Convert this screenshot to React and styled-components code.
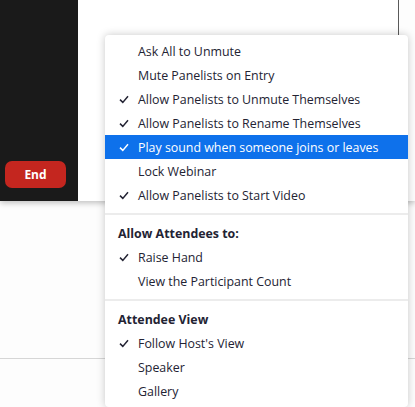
import React from "react";
import styled, { createGlobalStyle } from "styled-components";

const Global = createGlobalStyle`
  html, body {
    margin: 0;
    padding: 0;
    background: #fdfdfd;
    font-family: "Open Sans", "Noto Sans", sans-serif;
  }
`;

const Page = styled.div`
  position: relative;
  width: 415px;
  height: 407px;
  overflow: hidden;
  background: #fdfdfd;
`;

const Window = styled.div`
  display: flex;
  height: 201px;
  box-shadow: 0 2px 6px rgba(0, 0, 0, 0.25);
  position: relative;
`;

const Video = styled.div`
  width: 78px;
  background: #1a1a1a;
  display: flex;
  align-items: flex-end;
  padding: 0 0 13px 5px;
  box-sizing: border-box;
`;

const EndButton = styled.button`
  width: 61px;
  height: 27px;
  border: none;
  border-radius: 7px;
  background: #c4261f;
  color: #fff;
  font-family: "Open Sans", sans-serif;
  font-weight: 700;
  font-size: 12px;
  padding: 0;
`;

const Content = styled.div`
  width: 320px;
  background: #ffffff;
  border-right: 1px solid #5a5a5a;
`;

const Spacer = styled.div`
  height: 157px;
`;

const Rule = styled.div`
  height: 1px;
  background: #d6d6d6;
`;

const Menu = styled.div`
  position: absolute;
  left: 105px;
  top: 35px;
  width: 303px;
  height: 372px;
  background: #fff;
  border-radius: 4px;
  box-shadow: 0 0 8px rgba(0, 0, 0, 0.22);
  padding-top: 4px;
  box-sizing: border-box;
`;

const Item = styled.div`
  display: flex;
  align-items: center;
  height: 24px;
  padding-left: 14px;
  font-size: 12.4px;
  color: ${(p) => (p.active ? "#ffffff" : "#232333")};
  background: ${(p) => (p.active ? "#0e71eb" : "transparent")};
  white-space: nowrap;
`;

const Check = styled.span`
  width: 19px;
  display: flex;
  align-items: center;
`;

const Heading = styled.div`
  height: 24px;
  display: flex;
  align-items: center;
  padding-left: 13px;
  font-weight: 700;
  font-size: 12.4px;
  color: #232333;
`;

const Divider = styled.div`
  height: 2px;
  background: #ececec;
  margin: 6px 0;
`;

const Tick = ({ color }) => (
  <svg width="10" height="9" viewBox="0 0 10 9">
    <path d="M1 4.6 L3.8 7.4 L9 1.3" fill="none" stroke={color} strokeWidth="1.5" />
  </svg>
);

const Row = ({ checked, active, children }) => (
  <Item active={active}>
    <Check>{checked && <Tick color={active ? "#fff" : "#232333"} />}</Check>
    {children}
  </Item>
);

export default function App() {
  return (
    <Page>
      <Global />
      <Window>
        <Video>
          <EndButton>End</EndButton>
        </Video>
        <Content />
      </Window>
      <Spacer />
      <Rule />
      <Menu>
        <Row>Ask All to Unmute</Row>
        <Row>Mute Panelists on Entry</Row>
        <Row checked>Allow Panelists to Unmute Themselves</Row>
        <Row checked>Allow Panelists to Rename Themselves</Row>
        <Row checked active>Play sound when someone joins or leaves</Row>
        <Row>Lock Webinar</Row>
        <Row checked>Allow Panelists to Start Video</Row>
        <Divider />
        <Heading>Allow Attendees to:</Heading>
        <Row checked>Raise Hand</Row>
        <Row>View the Participant Count</Row>
        <Divider />
        <Heading>Attendee View</Heading>
        <Row checked>Follow Host's View</Row>
        <Row>Speaker</Row>
        <Row>Gallery</Row>
      </Menu>
    </Page>
  );
}
